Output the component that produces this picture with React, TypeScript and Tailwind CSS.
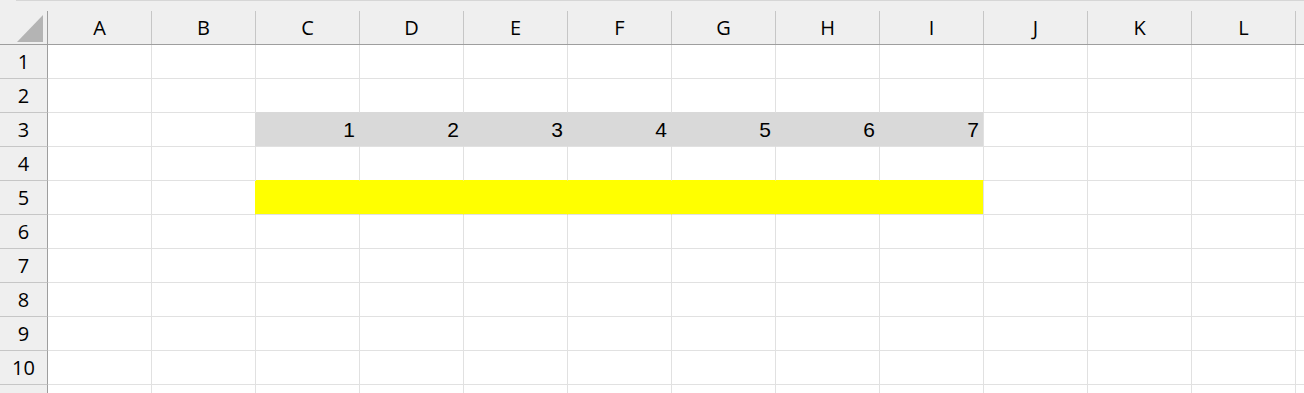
const columns = ['A', 'B', 'C', 'D', 'E', 'F', 'G', 'H', 'I', 'J', 'K', 'L'];
const rows = [1, 2, 3, 4, 5, 6, 7, 8, 9, 10, 11];

const fills: Record<number, string> = { 3: 'gray', 5: 'yellow' };

// row 3 holds the numbers 1..7 in C..I, row 5 is filled yellow over the same span
const cellValue = (row: number, col: number) => {
  if (row === 3 && col >= 2 && col <= 8) return String(col - 1);
  return '';
};

const rightBorder = (row: number, col: number) => {
  const fill = fills[row];
  if (!fill || col < 1 || col > 7) return 'border-r-[#e1e1e1]';
  return fill === 'gray' ? 'border-r-[#d9d9d9]' : 'border-r-[#ffff00]';
};

const bottomBorder = (row: number, col: number) => {
  if (col < 2 || col > 8) return 'border-b-[#e1e1e1]';
  if (row === 2) return 'border-b-[#d9d9d9]';
  if (row === 4) return 'border-b-[#ffff00]';
  return 'border-b-[#e1e1e1]';
};

const background = (row: number, col: number) => {
  if (col < 2 || col > 8) return 'bg-white';
  if (row === 3) return 'bg-[#d9d9d9]';
  if (row === 5) return 'bg-[#ffff00]';
  return 'bg-white';
};

const App = () => {
  return (
    <div
      className="w-[1304px] h-[393px] overflow-hidden bg-white text-black"
      style={{ fontFamily: '"Open Sans", "Liberation Sans", sans-serif' }}
    >
      {/* Column header strip */}
      <div className="bg-[#efefef]">
        <div className="h-px ml-4 bg-[#d6d6d6]" />
        <div className="h-[10px]" />
        <div className="flex h-[34px] border-b border-[#9e9e9e]">
          {/* Select-all corner */}
          <div className="w-[48px] shrink-0 border-r border-[#9e9e9e] flex items-end justify-end pr-[3px] pb-[2px]">
            <svg width="27" height="27" viewBox="0 0 27 27">
              <polygon points="26,0 26,27 0,27" fill="#b4b4b4" />
            </svg>
          </div>
          {columns.map((c) => (
            <div
              key={c}
              className="w-[104px] shrink-0 border-r border-[#c6c6c6] flex items-center justify-center text-[20px] leading-none"
            >
              {c}
            </div>
          ))}
          <div className="flex-1" />
        </div>
      </div>

      {/* Sheet body */}
      {rows.map((r) => (
        <div key={r} className="flex h-[34px]">
          <div className="w-[48px] shrink-0 bg-[#efefef] border-r border-b border-r-[#9e9e9e] border-b-[#c6c6c6] flex items-center justify-center text-[20px] leading-none">
            {r < 11 ? r : ''}
          </div>
          {columns.map((c, ci) => (
            <div
              key={c}
              className={`w-[104px] shrink-0 border-r border-b flex items-center justify-end pr-[4px] text-[21px] leading-none ${background(r, ci)} ${rightBorder(r, ci)} ${bottomBorder(r, ci)}`}
              style={{ fontFamily: '"Liberation Sans", Arial, sans-serif' }}
            >
              {cellValue(r, ci)}
            </div>
          ))}
          <div className="flex-1 border-b border-[#e1e1e1]" />
        </div>
      ))}
    </div>
  );
};

export default App;
